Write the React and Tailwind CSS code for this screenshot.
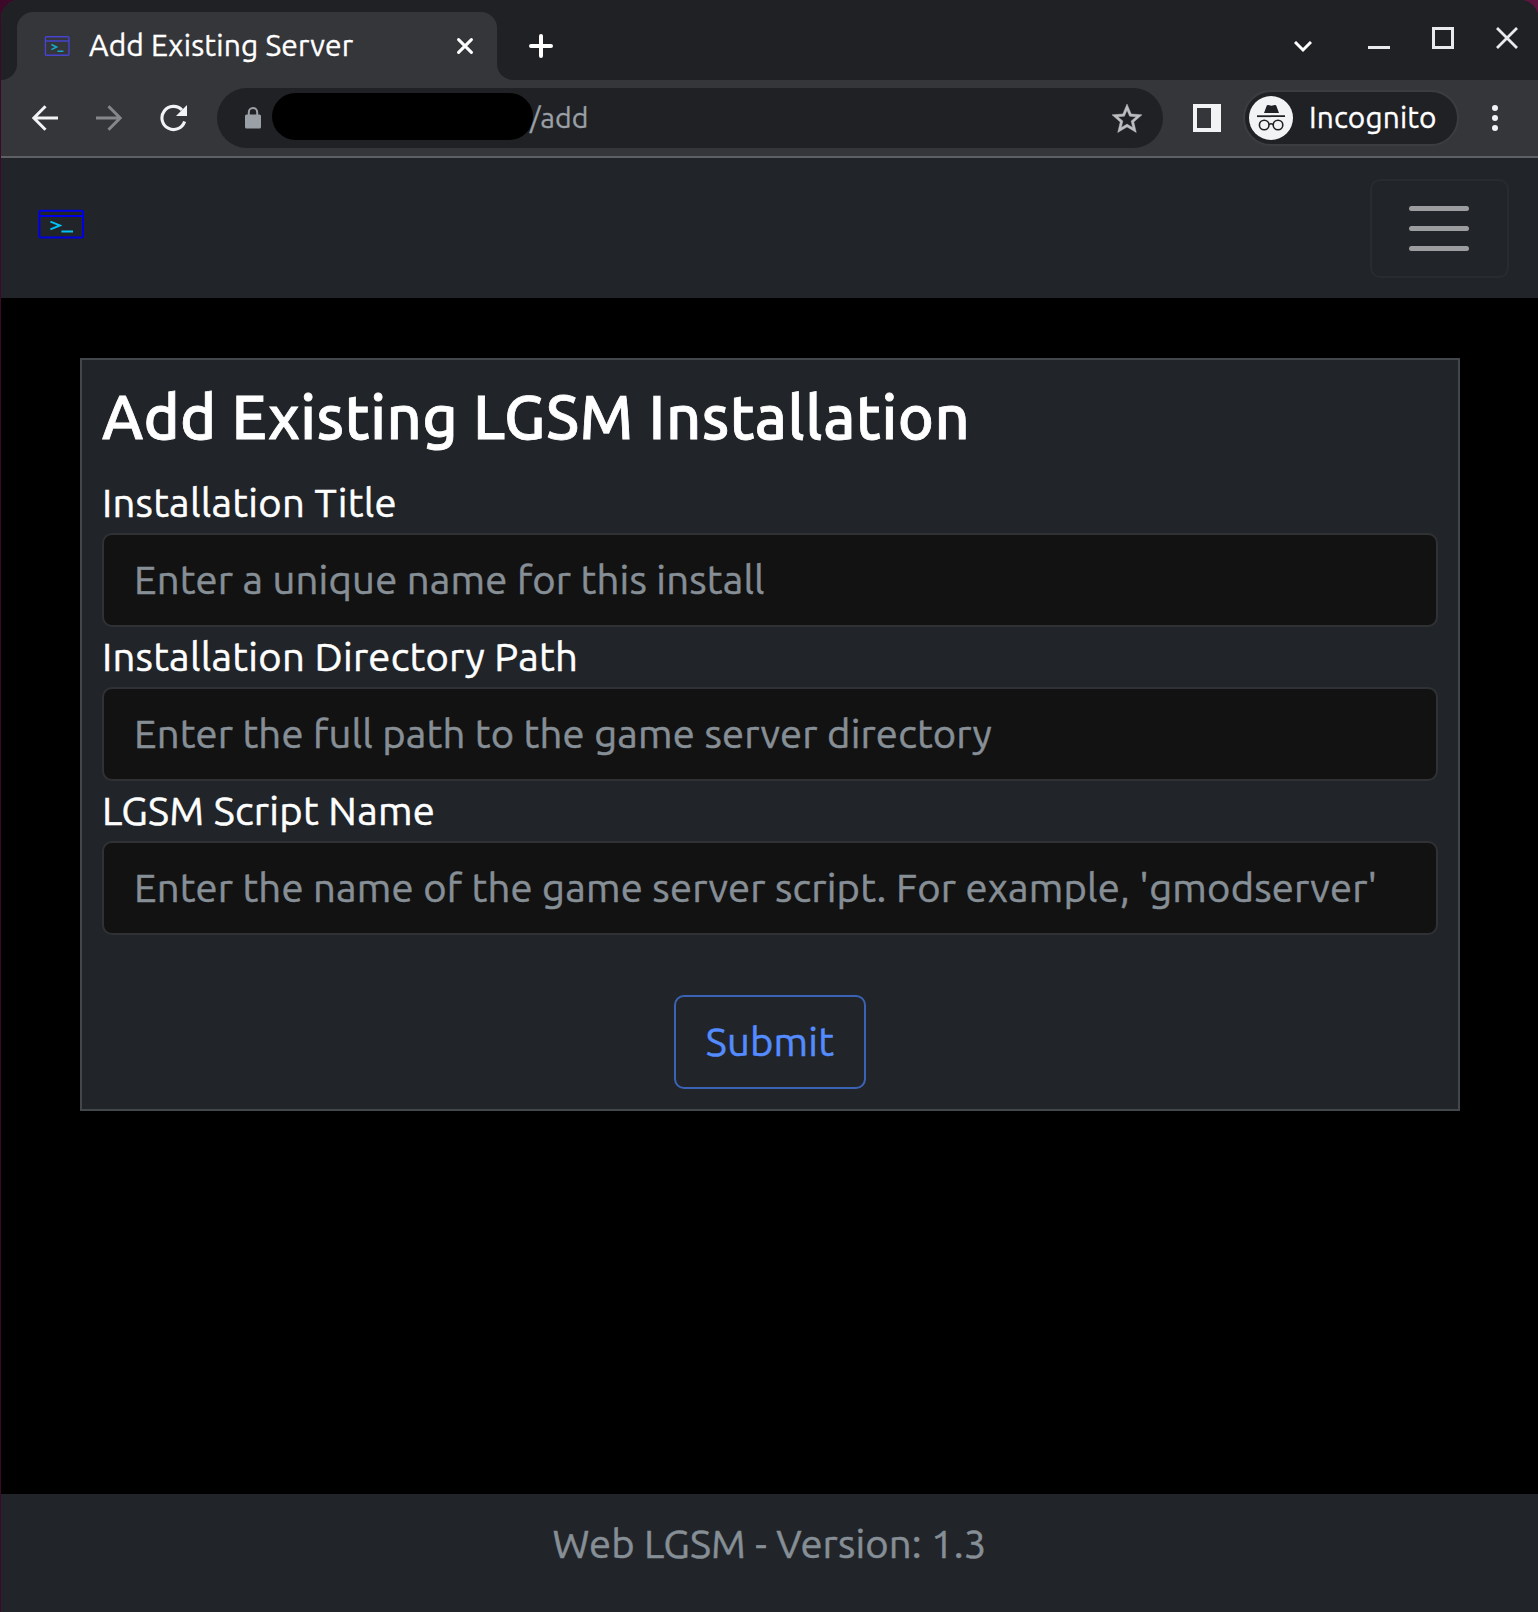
import React from "react";

function Favicon() {
  return (
    <svg viewBox="0 0 26 20" className="h-5 w-[26px] shrink-0" fill="none">
      <rect x="1.4" y="0.8" width="23.6" height="18.4" rx="1" stroke="#4643d0" strokeWidth="1.4" />
      <path d="M1.4 5H25" stroke="#4643d0" strokeWidth="1.4" />
      <path d="M7.4 8.6L12.6 11L7.4 13.6" stroke="#15a9c9" strokeWidth="1.6" />
      <path d="M13.4 15.2H19.4" stroke="#15a9c9" strokeWidth="1.6" />
    </svg>
  );
}

function TerminalLogo() {
  return (
    <svg viewBox="0 0 47 30" className="mt-[51px] h-[30px] w-[47px]" fill="none">
      <rect x="1.4" y="1.8" width="43.6" height="26.6" rx="1.5" stroke="#0000e6" strokeWidth="2" />
      <path d="M1.4 7H45" stroke="#0000e6" strokeWidth="2" />
      <path d="M12.4 12.6L21.9 16.4L12.4 20.4" stroke="#00c3f5" strokeWidth="2" />
      <path d="M23.4 22.4H35" stroke="#00c3f5" strokeWidth="2" />
    </svg>
  );
}

function TabStrip() {
  return (
    <div className="flex h-20 bg-[#202124]">
      <div className="w-4 shrink-0 bg-[#35363a]">
        <div className="h-full rounded-br-2xl bg-[#202124]" />
      </div>
      <div className="flex w-[480px] shrink-0 flex-col bg-[#202124]">
        <div className="mt-3 flex h-[68px] items-center rounded-t-2xl bg-[#35363a] pr-6 pl-[27px]">
          <Favicon />
          <span className="-mt-0.5 ml-[19px] text-[30px] leading-[40px] tracking-[0.16px] whitespace-nowrap text-white [-webkit-text-stroke:0.35px]">Add Existing Server</span>
          <svg viewBox="0 0 16 16" className="ml-auto size-4 shrink-0" fill="none" stroke="#fff" strokeWidth="3" strokeLinecap="round">
            <path d="M1.6 1.6L14.4 14.4M14.4 1.6L1.6 14.4" />
          </svg>
        </div>
      </div>
      <div className="min-w-0 flex-1 bg-[#35363a]">
        <div className="flex h-full rounded-bl-2xl bg-[#202124] pr-5 pl-8">
          <svg viewBox="0 0 24 24" className="mt-[34px] size-6" fill="none" stroke="#fff" strokeWidth="4" strokeLinecap="round">
            <path d="M12 2V22M2 12H22" />
          </svg>
          <svg viewBox="0 0 18 12" className="mt-[41px] ml-auto h-3 w-[18px]" fill="none" stroke="#fff" strokeWidth="3">
            <path d="M1 1L9 9L17 1" />
          </svg>
          <div className="mt-[46px] ml-14 h-[3px] w-[22px] bg-[#e8eaed]" />
          <div className="mt-[27px] ml-[42px] size-[22px] border-[3px] border-[#e8eaed]" />
          <svg viewBox="0 0 22 22" className="mt-[27px] ml-[42px] size-[22px]" fill="none" stroke="#e8eaed" strokeWidth="2.8">
            <path d="M1 1L21 21M21 1L1 21" />
          </svg>
        </div>
      </div>
    </div>
  );
}

function IncognitoIcon() {
  return (
    <svg viewBox="0 0 44 44" className="size-11 shrink-0">
      <circle cx="22" cy="22" r="22" fill="#f1f3f4" />
      <path d="M15 17L17.8 9.6Q18.2 8.7 19.2 9L22.5 9.7L25.8 9Q26.8 8.7 27.2 9.6L30 17Z" fill="#202124" />
      <path d="M8 20.2H36" stroke="#202124" strokeWidth="1.8" />
      <g fill="none" stroke="#202124" strokeWidth="1.6">
        <circle cx="15.2" cy="29" r="4.8" />
        <circle cx="29" cy="29" r="4.8" />
        <path d="M20 28.6Q22.1 27 24.2 28.6" />
      </g>
    </svg>
  );
}

function Toolbar() {
  return (
    <div className="flex h-[78px] items-center border-b-2 border-[#5f6063] bg-[#35363a] pl-[31px]">
      <svg viewBox="0 0 26 26" className="-mt-px size-[26px] shrink-0" fill="none" stroke="#f1f3f4" strokeWidth="3">
        <path d="M26 13H2.5M13.5 1.2L1.8 13L13.5 24.8" />
      </svg>
      <svg viewBox="0 0 26 26" className="-mt-px ml-[38px] size-[26px] shrink-0" fill="none" stroke="#86878a" strokeWidth="3">
        <path d="M0 13H23.5M12.5 1.2L24.2 13L12.5 24.8" />
      </svg>
      <svg viewBox="0 0 28 28" className="ml-[38px] size-7 shrink-0" fill="none">
        <path d="M24.6 17.5A11.6 11.6 0 1 1 22 6" stroke="#f1f3f4" strokeWidth="3.1" />
        <path d="M27 1V12H16Z" fill="#f1f3f4" />
      </svg>
      <div className="ml-[29px] flex h-[60px] w-[946px] shrink-0 items-center rounded-full bg-[#202124] pr-[18px] pl-7">
        <svg viewBox="0 0 16 22" className="h-[22px] w-4 shrink-0">
          <path d="M3.8 9V5.2A4.2 4.2 0 0 1 12.2 5.2V9" fill="none" stroke="#9aa0a6" strokeWidth="2" />
          <rect x="0" y="7.5" width="16" height="14" rx="1.6" fill="#9aa0a6" />
        </svg>
        <div className="-mt-[3px] ml-[11px] h-[47px] w-[261px] shrink-0 rounded-full bg-black" />
        <span className="-mt-0.5 -ml-[3px] text-[28.5px] leading-[40px] text-[#9aa0a6] [-webkit-text-stroke:0.3px]">/add</span>
        <svg viewBox="0 0 24 24" className="mt-px ml-auto size-9 shrink-0" fill="#bdbec0" stroke="#bdbec0" strokeWidth="0.3">
          <path d="M22 9.24l-7.19-.62L12 2 9.19 8.63 2 9.24l5.46 4.73L5.82 21 12 17.27 18.18 21l-1.63-7.03L22 9.24zM12 15.4l-3.76 2.27 1-4.28-3.32-2.88 4.38-.38L12 6.1l1.71 4.04 4.38.38-3.32 2.88 1 4.28L12 15.4z" />
        </svg>
      </div>
      <div className="ml-[30px] h-7 w-7 shrink-0 border-4 border-r-[10px] border-[#f1f3f4]" />
      <div className="ml-[22px] flex h-14 w-[216px] shrink-0 items-center rounded-full border-2 border-[#3c3d41] bg-[#202124] pl-1">
        <IncognitoIcon />
        <span className="-mt-0.5 ml-4 text-[29.8px] leading-[40px] tracking-[0.15px] text-white [-webkit-text-stroke:0.35px]">Incognito</span>
      </div>
      <div className="ml-[33px] flex flex-col gap-1">
        <div className="size-1.5 rounded-full bg-[#f1f3f4]" />
        <div className="size-1.5 rounded-full bg-[#f1f3f4]" />
        <div className="size-1.5 rounded-full bg-[#f1f3f4]" />
      </div>
    </div>
  );
}

function Navbar() {
  return (
    <nav className="flex h-[140px] items-start justify-between bg-[#212529] pr-[29px] pl-[37px]">
      <TerminalLogo />
      <button className="mt-[21px] flex h-[99px] w-[139px] flex-col items-center justify-center gap-[15px] rounded-[10px] border-2 border-[#282c30] pr-px">
        <span className="h-[5px] w-[60px] rounded-full bg-[#9b9d9f]" />
        <span className="h-[5px] w-[60px] rounded-full bg-[#9b9d9f]" />
        <span className="h-[5px] w-[60px] rounded-full bg-[#9b9d9f]" />
      </button>
    </nav>
  );
}

function Field({ label, placeholder }) {
  return (
    <label className="block">
      <span className="block h-[60px] text-[40px] leading-[60px] tracking-[0.26px] text-white [-webkit-text-stroke:0.5px]">{label}</span>
      <input
        placeholder={placeholder}
        className="block h-[94px] w-full rounded-[10px] border-2 border-[#2f3134] bg-[#121212] px-[30px] pb-0.5 text-[40px] leading-[60px] tracking-[0.19px] [-webkit-text-stroke:0.5px] placeholder:text-[#868e96] placeholder:opacity-100"
      />
    </label>
  );
}

export default function App() {
  return (
    <div className="h-[1612px] w-[1538px] overflow-hidden bg-[#3d0829] bg-linear-to-r from-[#3d0829] to-[#5e1640] pl-px font-['Ubuntu','Noto_Sans',sans-serif]">
      <div className="flex h-full flex-col overflow-hidden rounded-t-[18px] bg-black">
        <TabStrip />
        <Toolbar />
        <Navbar />
        <main className="flex-1 px-[79px] pt-[60px] pr-[78px]">
          <form className="border-2 border-[#42474b] bg-[#212529] px-5 pt-[21px] pb-5">
            <h2 className="mb-5 text-[61.2px] leading-[72px] font-medium tracking-[0.48px] text-white [-webkit-text-stroke:0.8px]">Add Existing LGSM Installation</h2>
            <Field label="Installation Title" placeholder="Enter a unique name for this install" />
            <Field label="Installation Directory Path" placeholder="Enter the full path to the game server directory" />
            <Field label="LGSM Script Name" placeholder="Enter the name of the game server script. For example, 'gmodserver'" />
            <div className="mt-[60px] flex justify-center">
              <button type="button" className="h-[94px] w-48 rounded-[10px] border-2 border-[#3b63b5] text-[40px] leading-[60px] tracking-[0.2px] text-[#548cff] [-webkit-text-stroke:0.5px]">Submit</button>
            </div>
          </form>
        </main>
        <footer className="h-[118px] bg-[#212529] pt-5 text-center text-[40px] leading-[60px] tracking-[0.14px] text-[#868e96] [-webkit-text-stroke:0.5px]">Web LGSM - Version: 1.3</footer>
      </div>
    </div>
  );
}
